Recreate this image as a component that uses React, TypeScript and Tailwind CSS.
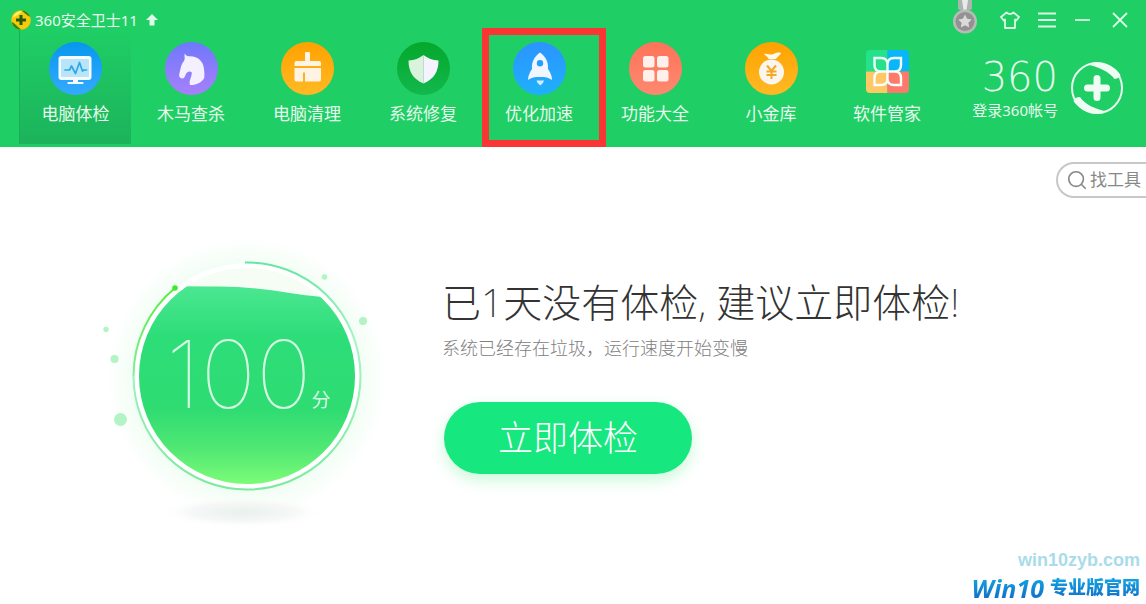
import { Search } from "lucide-react";
import type { ReactNode } from "react";

const fontStack =
  "font-['Noto_Sans','Noto_Sans_CJK_SC',sans-serif]";

function Disc({
  id,
  from,
  to,
  children,
}: {
  id: string;
  from: string;
  to: string;
  children: ReactNode;
}) {
  return (
    <svg viewBox="0 0 53 53" className="h-[53px] w-[53px]" aria-hidden="true">
      <defs>
        <linearGradient id={id} x1="0" y1="0" x2="0" y2="1">
          <stop offset="0" stopColor={from} />
          <stop offset="1" stopColor={to} />
        </linearGradient>
      </defs>
      <circle cx="26.5" cy="26.5" r="26.5" fill={`url(#${id})`} />
      {children}
    </svg>
  );
}

function CheckupIcon() {
  return (
    <Disc id="checkup" from="#0797ee" to="#34aaff">
      <rect x="9.500" y="14" width="33" height="24" rx="3" fill="#f4fcff" />
      <rect x="12" y="17" width="28" height="18" rx="1" fill="#b9e5fa" />
      <path
        d="M16 28h4.500l2-4 4 7.500 4-11 3 8.500 1.500-1h2.500"
        fill="none"
        stroke="#2ca7e8"
        strokeWidth="1.700"
        strokeLinejoin="round"
        strokeLinecap="round"
      />
      <path d="M24 38h5v2h5q1.500 1 0 2H19q-1.500-1 0-2h5z" fill="#f4fcff" />
    </Disc>
  );
}

function TrojanIcon() {
  return (
    <Disc id="trojan" from="#6f78fb" to="#a780fa">
      <path
        d="M19.500 11.500c1 1.500 2.500 2.600 4.200 2.800C32 13.500 38.500 19 39 27c.3 4 .8 7 0 9.500-3 4.500-8 6.800-14 6.500-1.500-4 1.800-7.500 1.800-12.500-1.800-1.800-4.500-1-6 1.700-1 2.300-1.300 4.300-3.800 4.300-2.200-.3-3.300-2.300-2.800-4 .8-3 1.300-8 3.300-11.500 1-1.500 2-2.500 2.200-4z"
        fill="#f4f0ff"
      />
    </Disc>
  );
}

function CleanIcon() {
  return (
    <Disc id="clean" from="#ffa200" to="#ffb925">
      <path
        d="M24 11q0-1 1-1h3q1 0 1 1v8h9q2 0 2 2v3H13.500v-3q0-2 2-2H24zM13.500 26H40v11.500q0 2-2 2H24V31q-1-1.500-2 0v8.500h-6.500q-2 0-2-2z"
        fill="#fff4e4"
      />
    </Disc>
  );
}

function RepairIcon() {
  return (
    <Disc id="repair" from="#04a82c" to="#12b84c">
      <path
        d="M26.500 13c-4.500 3.500-9 5-15 5.500 0 11 4.500 18.500 15 23z"
        fill="#d9f3dc"
      />
      <path
        d="M26.500 13c4.500 3.500 9 5 15 5.500 0 11-4.500 18.500-15 23z"
        fill="#f5f3ff"
      />
    </Disc>
  );
}

function SpeedIcon() {
  return (
    <Disc id="speed" from="#2c93ff" to="#1fb0fb">
      <path
        fillRule="evenodd"
        d="M27 10.500c5.500 4 8.500 9 8 16.500 2 3 4 6.500 4 11-3.500-2.500-6.500-3-12-3s-8.500.5-12 3c0-4.500 2-8 4-11-.5-7.500 2.500-12.500 8-16.500zm0 7.500a3.200 3.200 0 100 6.400 3.200 3.200 0 000-6.400z"
        fill="#f0f6ff"
      />
      <path d="M23.500 38.500h7.500q-.5 3-3.700 5-3.300-2-3.800-5z" fill="#d4ebff" />
    </Disc>
  );
}

function ToolboxIcon() {
  return (
    <Disc id="toolbox" from="#ff7359" to="#fc8970">
      <g fill="#fff0ec">
        <rect x="14" y="14" width="11.500" height="11.500" rx="2.500" />
        <rect x="28" y="14" width="11.500" height="11.500" rx="2.500" />
        <rect x="14" y="28" width="11.500" height="11.500" rx="2.500" />
        <rect x="28" y="28" width="11.500" height="11.500" rx="2.500" />
      </g>
    </Disc>
  );
}

function TreasuryIcon() {
  return (
    <Disc id="treasury" from="#ffa200" to="#ffb925">
      <path
        d="M19 12c3-1 5 1 8 .5 3-.5 5-3 9-1.500-1 3-4 3.500-5 6h-7.500c-.5-2.500-3-3-4.500-5z"
        fill="#fffaf0"
      />
      <circle cx="26.500" cy="30" r="12.500" fill="#faf6ee" />
      <path
        d="M22 23.500l4.500 5.500 4.500-5.500M26.500 29v8M21.500 29.500h10M21.500 33h10"
        fill="none"
        stroke="#f7a823"
        strokeWidth="2"
      />
    </Disc>
  );
}

function SoftwareIcon() {
  return (
    <svg viewBox="0 0 53 53" className="h-[53px] w-[53px]" aria-hidden="true">
      <clipPath id="softwareTile">
        <rect x="5" y="8" width="43" height="43" rx="4" />
      </clipPath>
      <g clipPath="url(#softwareTile)">
        <path d="M5 8h21.500v21.500H5z" fill="#25e18c" />
        <path d="M26.500 8H48v21.500H26.500z" fill="#09b7f8" />
        <path d="M5 29.500h21.500V51H5z" fill="#ffc765" />
        <path d="M26.500 29.500H48V51H26.500z" fill="#ff786c" />
      </g>
      <path
        d="M26.500 29.500H20q-6.500 0-6.500-6.500v-7H20q6.500 0 6.500 6.500zM26.500 29.500v-7q0-6.500 6.500-6.500h7v7q0 6.500-6.500 6.500zM26.500 29.500v7q0 6.500-6.500 6.500h-6.500v-7q0-6.500 6.500-6.500zM26.500 29.500h7q6.500 0 6.500 6.500v7h-7q-6.500 0-6.500-6.500z"
        fill="none"
        stroke="#f4fff9"
        strokeWidth="2.400"
      />
    </svg>
  );
}

const tabs = [
  { label: "电脑体检", icon: <CheckupIcon />, active: true },
  { label: "木马查杀", icon: <TrojanIcon /> },
  { label: "电脑清理", icon: <CleanIcon /> },
  { label: "系统修复", icon: <RepairIcon /> },
  { label: "优化加速", icon: <SpeedIcon />, marked: true },
  { label: "功能大全", icon: <ToolboxIcon /> },
  { label: "小金库", icon: <TreasuryIcon /> },
  { label: "软件管家", icon: <SoftwareIcon /> },
];

const windowButtons = [
  {
    label: "换肤",
    box: "0 0 20 20",
    size: "h-5 w-5",
    path: "M6.500 2.500Q10 5.500 13.500 2.500L19 7l-2.700 3.500-1.300-1V18H5V9.500l-1.300 1L1 7z",
  },
  {
    label: "菜单",
    box: "0 0 18 20",
    size: "h-5 w-[18px]",
    path: "M0 3.500h18M0 10h18M0 16.500h18",
  },
  { label: "最小化", box: "0 0 16 20", size: "h-5 w-4", path: "M1 10h15" },
  {
    label: "关闭",
    box: "0 0 16 20",
    size: "h-5 w-4",
    path: "M1 3l14 14M15 3L1 17",
  },
];

function AppLogo() {
  return (
    <svg viewBox="0 0 20 20" className="h-5 w-5" aria-hidden="true">
      <circle cx="10" cy="10" r="9.800" fill="#f8c90c" />
      <path d="M2 8a9 9 0 0110-7L8 4z" fill="#fff36b" />
      <path
        d="M10 .5c4-.5 8 2.500 9.300 6.500C16 5.500 14 3 10 .5zM.8 12c3 1 5 4.500 9.500 7.500C5 20 1.500 16.500.8 12z"
        fill="#2c8a12"
      />
      <path d="M10 5v10M5 10h10" stroke="#245f0b" strokeWidth="3" />
    </svg>
  );
}

function Medal() {
  return (
    <svg viewBox="0 0 26 34" className="h-[34px] w-[26px]" aria-hidden="true">
      <path d="M6 0h14v9l-7 4-7-4z" fill="#a9b5ad" />
      <path d="M10 0h6l-1.500 10h-3z" fill="#e8ebe9" />
      <circle cx="13" cy="21.500" r="12" fill="#b9bbb9" />
      <circle cx="13" cy="21.500" r="9.500" fill="#929292" />
      <path
        d="M13 14.500l2.100 4.300 4.700.7-3.400 3.300.8 4.700-4.200-2.200-4.200 2.200.8-4.700-3.400-3.300 4.700-.7z"
        fill="#dadada"
      />
    </svg>
  );
}

function Emblem() {
  return (
    <svg viewBox="0 0 54 54" className="h-[54px] w-[54px]" aria-hidden="true">
      <circle cx="27" cy="27" r="25" fill="none" stroke="#e6faee" strokeWidth="2" />
      <path
        d="M17 3.500C30-1.500 44 4 50.500 14q-1 3.500-6 4C39 10.500 29 6 17 3.500zM37 50.500C24 55.500 10 50 3.500 40q1-4 6.500-4C15 43.500 25 48 37 50.500z"
        fill="#effcf4"
      />
      <path
        d="M27 17.500v19M17.500 27h19"
        stroke="#effcf4"
        strokeWidth="7"
        strokeLinecap="round"
      />
    </svg>
  );
}

function ScoreBall() {
  return (
    <div className="relative h-[300px] w-[300px] shrink-0">
      <svg viewBox="0 0 300 300" className="h-full w-full" aria-hidden="true">
        <defs>
          <radialGradient id="halo">
            <stop offset="0.7" stopColor="#e2fce9" />
            <stop offset="0.84" stopColor="#f4fef6" />
            <stop offset="1" stopColor="#ffffff" />
          </radialGradient>
          <linearGradient id="liquid" x1="0" y1="0" x2="0" y2="1">
            <stop offset="0" stopColor="#4be791" />
            <stop offset="0.25" stopColor="#2ddd78" />
            <stop offset="0.6" stopColor="#2edc72" />
            <stop offset="0.8" stopColor="#51e874" />
            <stop offset="1" stopColor="#84ff78" />
          </linearGradient>
          <linearGradient id="ring" x1="0" y1="0" x2="0" y2="1">
            <stop offset="0" stopColor="#66e5a4" />
            <stop offset="0.35" stopColor="#a4f5c5" />
            <stop offset="1" stopColor="#7ce99e" />
          </linearGradient>
          <linearGradient id="ringTail" x1="0" y1="1" x2="0" y2="0">
            <stop offset="0" stopColor="#83ee9b" />
            <stop offset="1" stopColor="#4ff03c" />
          </linearGradient>
          <radialGradient id="floor">
            <stop offset="0" stopColor="#ebf0ed" />
            <stop offset="0.6" stopColor="#f5f8f6" />
            <stop offset="1" stopColor="#ffffff" stopOpacity="0" />
          </radialGradient>
          <clipPath id="ball">
            <circle cx="157" cy="136" r="108" />
          </clipPath>
        </defs>
        <circle cx="157" cy="138" r="140" fill="url(#halo)" />
        <ellipse cx="153" cy="272" rx="84" ry="16" fill="url(#floor)" />
        <circle cx="157" cy="136" r="113" fill="#ffffff" />
        <circle cx="157" cy="136" r="108" fill="#f6fdf5" />
        <path
          d="M40 46.500Q95 46 130 46.500T200 53T270 58V250H40z"
          fill="url(#liquid)"
          clipPath="url(#ball)"
        />
        <path
          d="M155 22.500A113.500 113.500 0 11 43.500 136"
          fill="none"
          stroke="url(#ring)"
          strokeWidth="2"
        />
        <path
          d="M43.500 136A113.500 113.500 0 0185 48"
          fill="none"
          stroke="url(#ringTail)"
          strokeWidth="2"
        />
        <circle cx="85" cy="48" r="2.800" fill="#3dea2c" />
        <g fill="#b2f4c3">
          <circle cx="234.500" cy="37" r="2.800" />
          <circle cx="273" cy="81" r="4" />
          <circle cx="16" cy="89.500" r="2.700" />
          <circle cx="24.500" cy="119" r="4" />
          <circle cx="30.500" cy="179.500" r="6.500" />
        </g>
      </svg>
      <p className="absolute top-[84px] left-[76px] flex items-end text-[#d5fae2]">
        <span className="font-['Inter','Noto_Sans',sans-serif] text-[94px] leading-[100px] font-thin">
          100
        </span>
        <span className="pb-2 text-[19px] leading-8">分</span>
      </p>
    </div>
  );
}

export default function App() {
  return (
    <div className={`flex min-h-screen flex-col overflow-hidden bg-white ${fontStack}`}>
      <header className="bg-[#1fce65] pb-[3px] text-[#e6faed]">
        {/* Title bar */}
        <div className="relative flex h-[30px] justify-between pt-2.5 pr-[18px] pl-[11px]">
          <div className="flex h-5 items-center gap-1">
            <AppLogo />
            <h1 className="text-[15px] leading-5">360安全卫士11</h1>
            <svg viewBox="0 0 12 12" className="ml-1 h-3 w-3" aria-hidden="true">
              <path d="M6 0l6 6H8.500v5.500h-5V6H0z" fill="#e0faea" />
            </svg>
          </div>
          <div className="flex h-5 items-center gap-[18px]">
            <button aria-label="勋章" className="absolute top-0 right-[168px]">
              <Medal />
            </button>
            {windowButtons.map((button) => (
              <button
                key={button.label}
                aria-label={button.label}
                className="last:ml-1"
              >
                <svg
                  viewBox={button.box}
                  className={button.size}
                  fill="none"
                  stroke="#dcf8e6"
                  strokeWidth="1.8"
                  strokeLinejoin="round"
                  aria-hidden="true"
                >
                  <path d={button.path} />
                </svg>
              </button>
            ))}
          </div>
        </div>

        <div className="flex items-start justify-between">
          {/* Navigation */}
          <nav className="flex gap-1 pl-[19px]">
            {tabs.map((tab) => (
              <button
                key={tab.label}
                className={`relative flex w-28 flex-col items-center pt-3 pb-[18px] ${
                  tab.active
                    ? "border-l border-[#1cab56] bg-linear-to-b from-[#1fce65] to-[#1cb35b]"
                    : ""
                }`}
              >
                {tab.icon}
                <span className="mt-[7px] text-[17px] leading-6">{tab.label}</span>
                {tab.marked && (
                  <span className="absolute -top-0.5 -right-[11px] -bottom-[3px] -left-px border-[7px] border-[#fb3434]" />
                )}
              </button>
            ))}
          </nav>

          {/* Account */}
          <button className="flex items-center gap-3 pt-[25px] pr-[22px]">
            <span className="flex flex-col items-end">
              <span className="font-['DejaVu_Sans_Light','DejaVu_Sans',sans-serif] text-[40px] leading-[44px] font-extralight">
                360
              </span>
              <span className="text-[15px] leading-[22px]">登录360帐号</span>
            </span>
            <Emblem />
          </button>
        </div>
      </header>

      <main>
        <div className="flex justify-end pt-[15px]">
          <label className="flex h-9 w-[90px] items-center gap-0.5 rounded-l-full border-2 border-r-0 border-[#c8c8c8] pl-2 text-[#888888]">
            <Search size={22} strokeWidth={1.8} className="shrink-0" />
            <input
              aria-label="找工具"
              placeholder="找工具"
              className="w-full min-w-0 text-[17px] outline-none placeholder:text-[#888888]"
            />
          </label>
        </div>

        <div className="mt-[42px] flex pl-[90px]">
          <ScoreBall />
          <section className="ml-[52px] pt-[34px]">
            <h2 className="text-[39px] leading-[56px] font-extralight text-[#333333]">
              已1天没有体检, 建议立即体检!
            </h2>
            <p className="mt-1 text-[18px] leading-7 font-light text-[#808080]">
              系统已经存在垃圾，运行速度开始变慢
            </p>
            <button className="mt-10 ml-0.5 h-[72px] w-[248px] rounded-full bg-[#17e77f] text-[35px] font-light text-white shadow-[0_6px_16px_#c9f9d9]">
              立即体检
            </button>
          </section>
        </div>
      </main>

      <footer className="mt-auto flex flex-col items-end pr-1.5 font-['Liberation_Sans','Noto_Sans_CJK_SC',sans-serif] font-bold">
        <a href="#" className="text-[18px] leading-6 text-[#a9dce9]">
          win10zyb.com
        </a>
        <a
          href="#"
          className="flex items-center gap-1.5 bg-linear-to-b from-[#16b4ea] to-[#1560c0] bg-clip-text text-transparent"
        >
          <span className="pl-1 font-['Open_Sans',sans-serif] text-[25px] leading-8 italic">
            Win10
          </span>
          <span className="text-[18px] leading-8 font-black">专业版官网</span>
        </a>
      </footer>
    </div>
  );
}
